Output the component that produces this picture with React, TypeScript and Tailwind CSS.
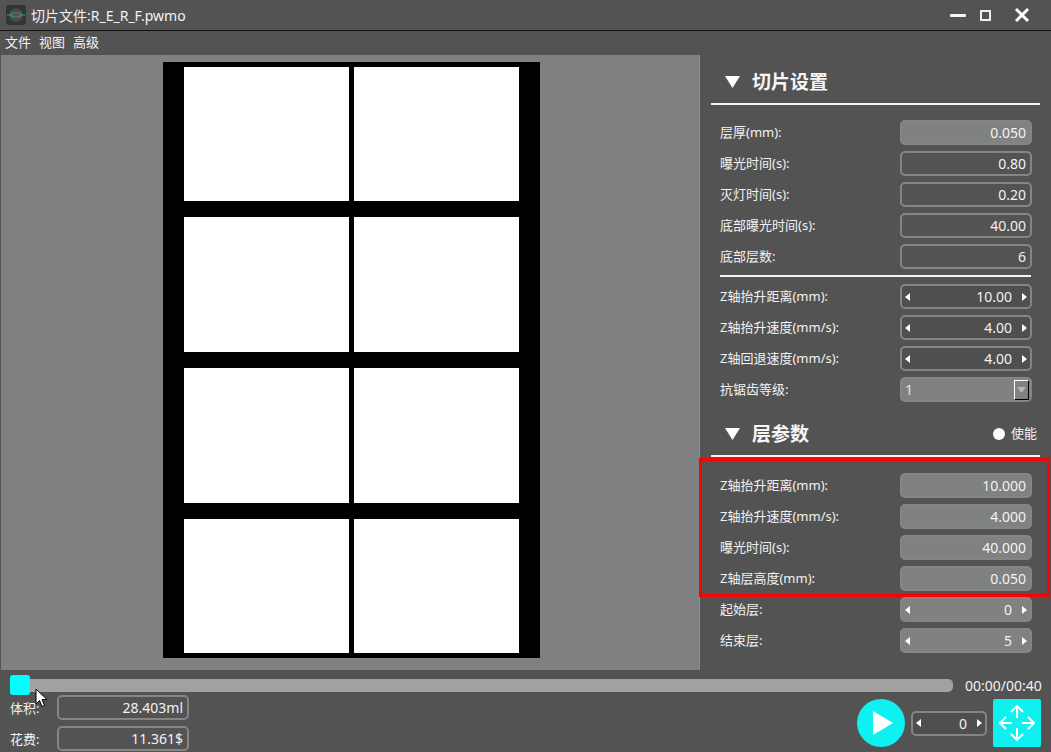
const FONT = "font-['Noto_Sans','Noto_Sans_CJK_SC',sans-serif]";

type Kind = "filled" | "outline" | "spin" | "spinFilled";

function ArrowLeft() {
  return (
    <svg width="5" height="8" viewBox="0 0 5 8" className="shrink-0">
      <path d="M5 0V8L0 4Z" fill="#fff" />
    </svg>
  );
}

function ArrowRight() {
  return (
    <svg width="5" height="8" viewBox="0 0 5 8" className="shrink-0">
      <path d="M0 0V8L5 4Z" fill="#fff" />
    </svg>
  );
}

function Field(props: { kind: Kind; value: string; className?: string }) {
  const spin = props.kind === "spin" || props.kind === "spinFilled";
  const filled = props.kind === "filled" || props.kind === "spinFilled";
  const bg = filled ? "bg-[#808281]" : props.kind === "spin" ? "bg-[#4f4f4f]" : "bg-[#535353]";
  return (
    <div
      className={`flex h-[25px] items-center rounded-[5px] border-2 border-[#848585] text-[14px] text-[#f2f2f2] ${bg} ${
        spin ? "px-[3px]" : "pr-[4px]"
      } ${props.className ?? "w-[132px]"}`}
    >
      {spin && <ArrowLeft />}
      <span className="flex-1 text-right">{props.value}</span>
      {spin && <span className="w-[10px]" />}
      {spin && <ArrowRight />}
    </div>
  );
}

function Row(props: { label: string; kind: Kind; value: string }) {
  return (
    <div className="flex h-[25px] items-center justify-between pl-[20px] pr-[19px]">
      <span className="text-[13px] text-[#f2f2f2]">{props.label}</span>
      <Field kind={props.kind} value={props.value} />
    </div>
  );
}

function SectionHead(props: { title: string; children?: React.ReactNode }) {
  return (
    <div className="mx-[11px] flex h-[50px] items-center border-b-2 border-[#f4f4f4] pt-[6px] pl-[14px] pr-[3px]">
      <svg width="15" height="12" viewBox="0 0 15 12" className="shrink-0">
        <path d="M0 0H15L7.5 12Z" fill="#fff" />
      </svg>
      <span className="ml-[12px] flex-1 text-[19px] font-bold text-[#f6f6f6]">{props.title}</span>
      {props.children}
    </div>
  );
}

function Slice() {
  return <div className="h-full w-[165px] bg-white" />;
}

const rowsA: { label: string; kind: Kind; value: string }[] = [
  { label: "层厚(mm):", kind: "filled", value: "0.050" },
  { label: "曝光时间(s):", kind: "outline", value: "0.80" },
  { label: "灭灯时间(s):", kind: "outline", value: "0.20" },
  { label: "底部曝光时间(s):", kind: "outline", value: "40.00" },
  { label: "底部层数:", kind: "outline", value: "6" },
];

const rowsB: { label: string; kind: Kind; value: string }[] = [
  { label: "Z轴抬升距离(mm):", kind: "spin", value: "10.00" },
  { label: "Z轴抬升速度(mm/s):", kind: "spin", value: "4.00" },
  { label: "Z轴回退速度(mm/s):", kind: "spin", value: "4.00" },
];

const rowsC: { label: string; kind: Kind; value: string }[] = [
  { label: "Z轴抬升距离(mm):", kind: "filled", value: "10.000" },
  { label: "Z轴抬升速度(mm/s):", kind: "filled", value: "4.000" },
  { label: "曝光时间(s):", kind: "filled", value: "40.000" },
  { label: "Z轴层高度(mm):", kind: "filled", value: "0.050" },
  { label: "起始层:", kind: "spinFilled", value: "0" },
  { label: "结束层:", kind: "spinFilled", value: "5" },
];

const sliceRows = ["h-[134px]", "h-[135px]", "h-[135px]", "h-[134px]"];

export default function App() {
  return (
    <div className={`${FONT} relative flex h-[752px] w-[1051px] flex-col overflow-hidden bg-[#535353]`}>
      {/* title bar */}
      <div className="flex h-[31px] shrink-0 items-center border-b border-[#141414] pl-[6px]">
        <svg width="20" height="20" viewBox="0 0 20 20" className="shrink-0">
          <rect width="20" height="20" rx="3" fill="#333435" />
          <circle cx="10" cy="10" r="7" fill="#4a4a4b" />
          <path d="M1 10h4l2-2h6l2 2h4M5 10l2 2h6l2-2" stroke="#2a9d96" strokeWidth="1.2" fill="none" />
          <circle cx="10" cy="10" r="1.8" fill="#8a3a3a" />
        </svg>
        <span className="ml-[5px] text-[14px] text-[#f2f2f2]">切片文件:R_E_R_F.pwmo</span>
        <div className="ml-auto flex items-center pr-[21px]">
          <div className="h-[3px] w-[16px] rounded-[1px] bg-[#f5f5f5]" />
          <div className="ml-[14px] size-[11px] border-2 border-[#f0f0f0]" />
          <svg width="16" height="16" viewBox="0 0 16 16" className="ml-[23px]">
            <path d="M2 2L14 14M14 2L2 14" stroke="#fff" strokeWidth="3" />
          </svg>
        </div>
      </div>

      {/* menu */}
      <div className="flex h-[24px] shrink-0 items-center gap-[8px] pl-[5px] text-[13px] text-[#f2f2f2]">
        <span>文件</span>
        <span>视图</span>
        <span>高级</span>
      </div>

      <div className="flex h-[615px] shrink-0">
        {/* slice preview */}
        <div className="ml-px w-[699px] shrink-0 border-r border-[#8e8e8e] bg-[#7f8180] pt-[7px] pl-[162px]">
          <div className="flex h-[596px] w-[377px] flex-col gap-[16px] bg-black pt-[5px] pb-[5px] pl-[21px]">
            {sliceRows.map((h, i) => (
              <div key={i} className={`flex gap-[5px] ${h}`}>
                <Slice />
                <Slice />
              </div>
            ))}
          </div>
        </div>

        {/* settings panel */}
        <div className="flex min-w-0 flex-1 flex-col">
          <SectionHead title="切片设置" />
          <div className="mt-[15px] flex flex-col gap-[6px]">
            {rowsA.map((r) => (
              <Row key={r.label} {...r} />
            ))}
          </div>
          <div className="mx-[20px] mt-[6px] h-[2px] bg-[#f4f4f4]" />
          <div className="mt-[7px] flex flex-col gap-[6px]">
            {rowsB.map((r) => (
              <Row key={r.label} {...r} />
            ))}
            <div className="flex h-[25px] items-center justify-between pl-[20px] pr-[19px]">
              <span className="text-[13px] text-[#f2f2f2]">抗锯齿等级:</span>
              <div className="flex h-[25px] w-[132px] items-center justify-between rounded-[5px] border-2 border-[#848585] bg-[#808281] pl-[3px] text-[14px] text-[#e4e4e4]">
                <span>1</span>
                <div className="mr-px flex h-[20px] w-[15px] items-center justify-center border-t border-l border-t-white border-l-white border-r border-b border-r-black border-b-black">
                  <svg width="9" height="6" viewBox="0 0 9 6">
                    <path d="M0 0H9L4.5 6Z" fill="#b5b6b6" />
                  </svg>
                </div>
              </div>
            </div>
          </div>
          <div className="mt-[5px]">
            <SectionHead title="层参数">
              <span className="size-[12px] rounded-full bg-white" />
              <span className="ml-[6px] text-[13px] text-[#f2f2f2]">使能</span>
            </SectionHead>
          </div>
          <div className="mt-[16px] flex flex-col gap-[6px]">
            {rowsC.map((r) => (
              <Row key={r.label + r.value} {...r} />
            ))}
          </div>
        </div>
      </div>

      {/* playback bar */}
      <div className="flex h-[25px] shrink-0 items-center pl-[10px] pt-[5px]">
        <div className="relative h-[13px] w-[943px] rounded-r-[5px] bg-[#a0a1a0]">
          <div className="absolute top-[-4px] left-0 size-[20px] rounded-[3px] bg-[#00ffff]" />
        </div>
        <span className="ml-[12px] text-[14px] text-[#f2f2f2]">00:00/00:40</span>
      </div>

      <div className="flex flex-1 items-start">
        <div className="flex flex-col gap-[6px] pl-[10px]">
          <div className="flex items-center">
            <span className="w-[47px] pt-[2px] text-[13px] text-[#f2f2f2]">体积:</span>
            <Field kind="outline" value="28.403ml" />
          </div>
          <div className="flex items-center">
            <span className="w-[47px] pt-[2px] text-[13px] text-[#f2f2f2]">花费:</span>
            <Field kind="outline" value="11.361$" />
          </div>
        </div>
        <div className="ml-auto flex items-center pt-[4px] pr-[10px]">
          <div className="flex size-[48px] items-center justify-center rounded-full bg-[#0ff0f0]">
            <svg width="20" height="24" viewBox="0 0 20 24" className="ml-[3px]">
              <path d="M0 0L20 12L0 24Z" fill="#fff" />
            </svg>
          </div>
          <Field kind="spin" value="0" className="ml-[6px] w-[76px]" />
          <div className="ml-[6px] flex size-[48px] items-center justify-center rounded-[2px] bg-[#0ff0f0]">
            <svg width="36" height="36" viewBox="0 0 36 36" fill="none" stroke="#fff" strokeWidth="2">
              <path d="M18 2V13M12 7L18 1L24 7" />
              <path d="M18 23V34M12 29L18 35L24 29" />
              <path d="M2 18H13M7 12L1 18L7 24" />
              <path d="M23 18H34M29 12L35 18L29 24" />
            </svg>
          </div>
        </div>
      </div>

      {/* mouse pointer */}
      <svg width="13" height="20" viewBox="0 0 13 20" className="absolute top-[688px] left-[35px]">
        <path d="M1 1V16L4.5 12.5L7 18.5L9.5 17.5L7 11.5H12Z" fill="#fff" stroke="#000" />
      </svg>

      {/* highlight */}
      <div className="absolute top-[458px] left-[699px] h-[139px] w-[351px] border-[3px] border-[#ff0000]" />
    </div>
  );
}
